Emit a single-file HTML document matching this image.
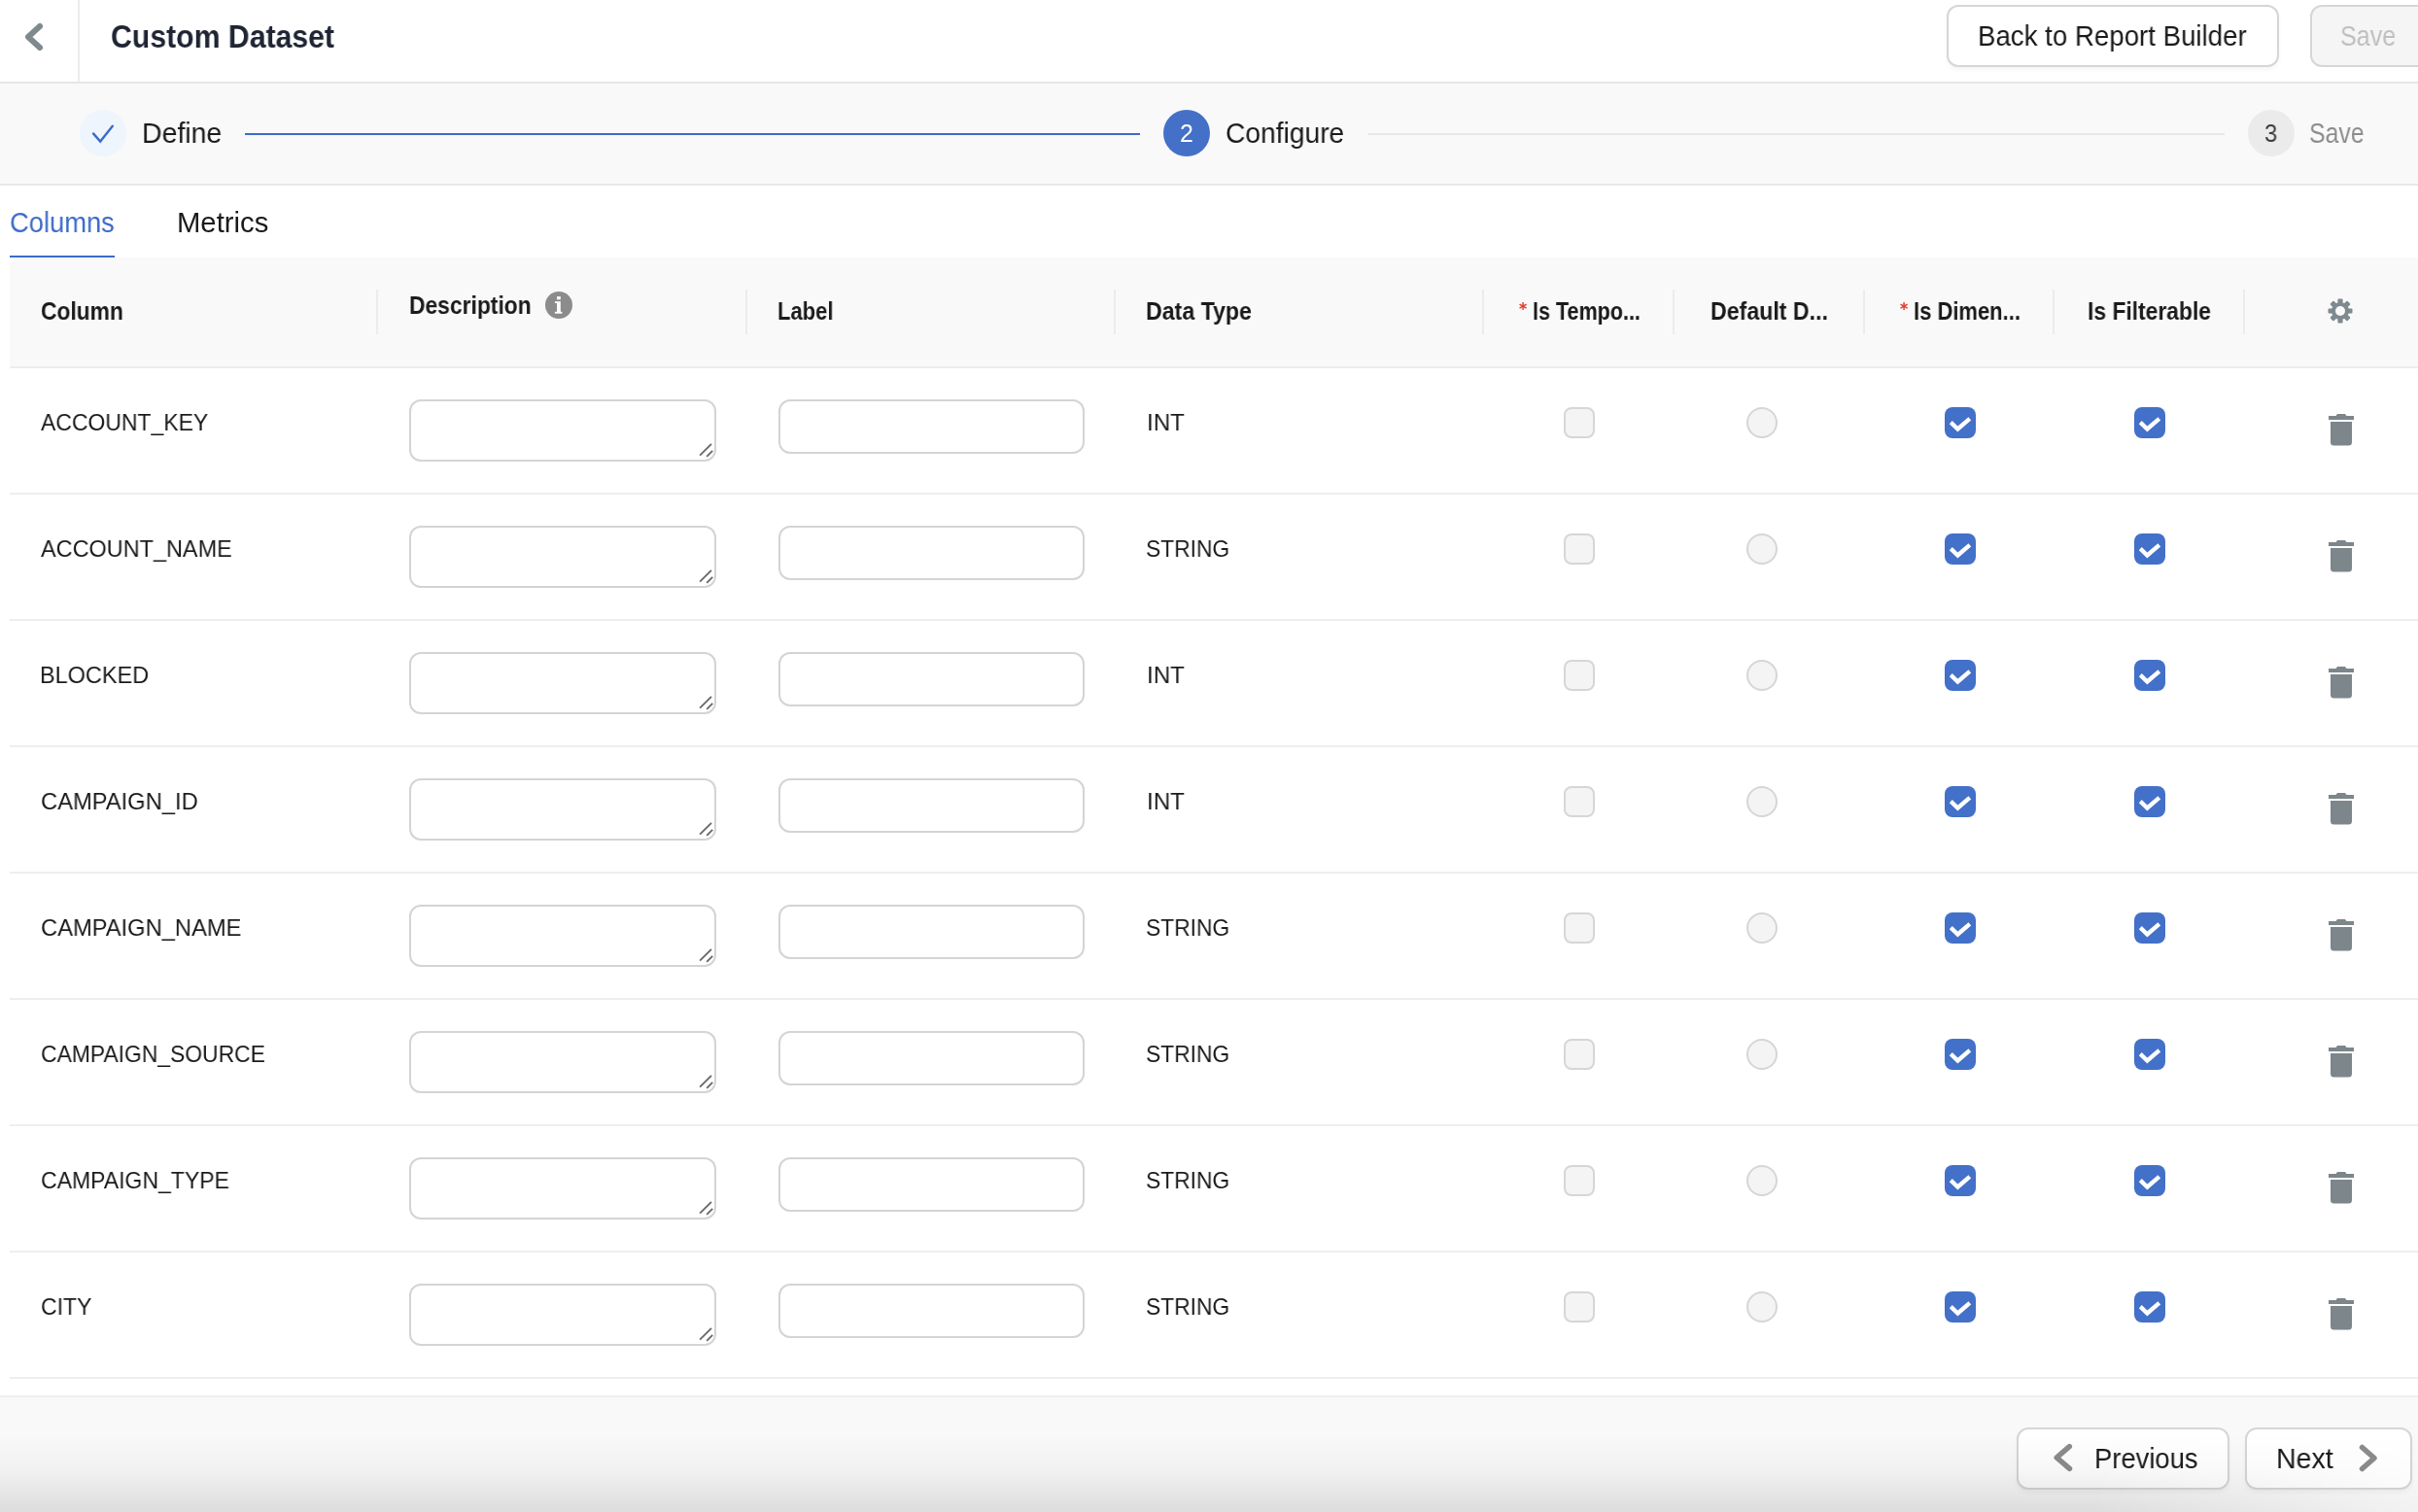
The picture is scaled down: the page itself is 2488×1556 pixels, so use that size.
<!DOCTYPE html>
<html><head><meta charset="utf-8"><title>Custom Dataset</title><style>
html,body{margin:0;padding:0}
body{width:2488px;height:1556px;overflow:hidden;position:relative;background:#fff;font-family:"Liberation Sans",sans-serif}
.t{position:absolute;line-height:1;white-space:nowrap;transform-origin:0 0;will-change:transform}
.c{text-align:center}
.btn{position:absolute;box-sizing:border-box;border:2px solid #d6d6d6;border-radius:12px;background:#fff;box-shadow:0 3px 4px rgba(0,0,0,0.04)}
.circ{position:absolute;width:48px;height:48px;border-radius:50%}
.ta{position:absolute;box-sizing:border-box;width:316px;height:64px;border:2px solid #d4d4d4;border-radius:12px;background:#fff}
.inp{position:absolute;box-sizing:border-box;width:315px;height:56px;border:2px solid #d4d4d4;border-radius:12px;background:#fff}
.cb{position:absolute;box-sizing:border-box;width:32px;height:32px;border:2px solid #d6d6d6;border-radius:8px;background:#f4f4f4}
@media (max-width:1400px){html{zoom:0.5}}
</style></head><body>
<div style="position:absolute;left:0;top:0;width:2488px;height:84px;background:#fff"></div>
<div style="position:absolute;left:0;top:84px;width:2488px;height:2px;background:#e6e6e6"></div>
<div style="position:absolute;left:80px;top:0;width:2px;height:84px;background:#e9edf0"></div>
<svg style="position:absolute;left:0;top:0" width="80" height="84"><polyline points="41,27 29,38 41,49" fill="none" stroke="#7f8a8f" stroke-width="6" stroke-linecap="round" stroke-linejoin="round"/></svg>
<div class="t" style="left:114.09px;top:20.73px;font-size:33.333px;font-weight:700;color:#1f2533;transform:scaleX(0.9067)">Custom Dataset</div>
<div class="btn" style="left:2003px;top:5px;width:342px;height:64px;"></div>
<div class="t" style="left:2035.20px;top:23.28px;font-size:29.13px;font-weight:400;color:#1a1a1a;transform:scaleX(0.9495)">Back to Report Builder</div>
<div class="btn" style="left:2377px;top:5px;width:140px;height:64px;background:#f5f5f5;box-shadow:none"></div>
<div class="t" style="left:2408.39px;top:23.05px;font-size:29.058px;font-weight:400;color:#bfbfbf;transform:scaleX(0.8648)">Save</div>
<div style="position:absolute;left:0;top:86px;width:2488px;height:103px;background:#f9f9f9"></div>
<div style="position:absolute;left:0;top:189px;width:2488px;height:2px;background:#e8e8e8"></div>
<div class="circ" style="left:82px;top:113px;background:#eef5fd"></div>
<svg style="position:absolute;left:82px;top:113px" width="48" height="48"><polyline points="14,24.4 21.2,32.6 33.8,16.8" fill="none" stroke="#3d6bc9" stroke-width="2.4" stroke-linecap="round" stroke-linejoin="miter"/></svg>
<div class="t" style="left:145.85px;top:123.36px;font-size:29.275px;font-weight:400;color:#1a1a1a;transform:scaleX(0.9728)">Define</div>
<div style="position:absolute;left:252px;top:137px;width:921px;height:2px;background:#3d6bc9"></div>
<div class="circ" style="left:1197px;top:113px;background:#4470c8"></div>
<div class="t" style="left:1214.00px;top:124.94px;font-size:24.928px;font-weight:400;color:#fff;transform:scaleX(1.0)">2</div>
<div class="t" style="left:1261.03px;top:123.28px;font-size:29.13px;font-weight:400;color:#1a1a1a;transform:scaleX(0.9677)">Configure</div>
<div style="position:absolute;left:1408px;top:137px;width:881px;height:2px;background:#e8e8e8"></div>
<div class="circ" style="left:2313px;top:113px;background:#ebebeb"></div>
<div class="t" style="left:2330.04px;top:124.94px;font-size:24.928px;font-weight:400;color:#3c3c3c;transform:scaleX(0.9583)">3</div>
<div class="t" style="left:2376.44px;top:123.23px;font-size:28.841px;font-weight:400;color:#8c8c8c;transform:scaleX(0.8609)">Save</div>
<div class="t" style="left:10.06px;top:214.58px;font-size:29.13px;font-weight:400;color:#3d6bc9;transform:scaleX(0.9381)">Columns</div>
<div style="position:absolute;left:10px;top:263px;width:108px;height:2px;background:#3d6bc9"></div>
<div class="t" style="left:182.09px;top:215.38px;font-size:29.13px;font-weight:400;color:#1a1a1a;transform:scaleX(1.0044)">Metrics</div>
<div style="position:absolute;left:10px;top:265px;width:2495px;height:112px;background:#f9f9f9;border-top-left-radius:12px"></div>
<div style="position:absolute;left:10px;top:377px;width:2495px;height:2px;background:#ededed"></div>
<div style="position:absolute;left:387px;top:298px;width:2px;height:46px;background:#ececec"></div>
<div style="position:absolute;left:767px;top:298px;width:2px;height:46px;background:#ececec"></div>
<div style="position:absolute;left:1146px;top:298px;width:2px;height:46px;background:#ececec"></div>
<div style="position:absolute;left:1525px;top:298px;width:2px;height:46px;background:#ececec"></div>
<div style="position:absolute;left:1721px;top:298px;width:2px;height:46px;background:#ececec"></div>
<div style="position:absolute;left:1917px;top:298px;width:2px;height:46px;background:#ececec"></div>
<div style="position:absolute;left:2112px;top:298px;width:2px;height:46px;background:#ececec"></div>
<div style="position:absolute;left:2308px;top:298px;width:2px;height:46px;background:#ececec"></div>
<div class="t" style="left:41.68px;top:308.04px;font-size:24.928px;font-weight:700;color:#1a1a1a;transform:scaleX(0.9156)">Column</div>
<div class="t" style="left:420.77px;top:301.74px;font-size:24.928px;font-weight:700;color:#1a1a1a;transform:scaleX(0.9172)">Description</div>
<svg style="position:absolute;left:561px;top:300px" width="28" height="28"><circle cx="14" cy="14" r="14" fill="#8c8c8c"/><g fill="#fff"><rect x="12" y="5.1" width="3.8" height="3.2"/><rect x="12" y="10.2" width="3.8" height="11.6"/><rect x="9.9" y="10.2" width="2.3" height="1.8"/><rect x="9.9" y="20.8" width="7.5" height="1.9"/></g></svg>
<div class="t" style="left:800.34px;top:307.84px;font-size:24.928px;font-weight:700;color:#1a1a1a;transform:scaleX(0.8823)">Label</div>
<div class="t" style="left:1179.14px;top:307.94px;font-size:24.928px;font-weight:700;color:#1a1a1a;transform:scaleX(0.9298)">Data Type</div>
<div class="t" style="left:1576.67px;top:307.74px;font-size:24.928px;font-weight:700;color:#1a1a1a;transform:scaleX(0.8648)">Is Tempo...</div>
<svg style="position:absolute;left:1562.7px;top:310.8px" width="8.2" height="8.2" viewBox="0 0 8 8"><g stroke="#e53d30" stroke-width="1.45"><line x1="4" y1="0" x2="4" y2="8"/><line x1="0.54" y1="2" x2="7.46" y2="6"/><line x1="0.54" y1="6" x2="7.46" y2="2"/></g></svg>
<div class="t" style="left:1759.64px;top:307.94px;font-size:24.928px;font-weight:700;color:#1a1a1a;transform:scaleX(0.9299)">Default D...</div>
<div class="t" style="left:1968.83px;top:307.94px;font-size:24.928px;font-weight:700;color:#1a1a1a;transform:scaleX(0.8826)">Is Dimen...</div>
<svg style="position:absolute;left:1955px;top:310.8px" width="8.2" height="8.2" viewBox="0 0 8 8"><g stroke="#e53d30" stroke-width="1.45"><line x1="4" y1="0" x2="4" y2="8"/><line x1="0.54" y1="2" x2="7.46" y2="6"/><line x1="0.54" y1="6" x2="7.46" y2="2"/></g></svg>
<div class="t" style="left:2148.17px;top:307.94px;font-size:24.928px;font-weight:700;color:#1a1a1a;transform:scaleX(0.9169)">Is Filterable</div>
<svg style="position:absolute;left:2395px;top:307px" width="26" height="26" viewBox="0 0 26 26"><g fill="#7f8a8f" transform="translate(13 13)">
<rect x="-2.6" y="-12.5" width="5.2" height="25" rx="1"/>
<rect x="-2.6" y="-12.5" width="5.2" height="25" rx="1" transform="rotate(45)"/>
<rect x="-2.6" y="-12.5" width="5.2" height="25" rx="1" transform="rotate(90)"/>
<rect x="-2.6" y="-12.5" width="5.2" height="25" rx="1" transform="rotate(135)"/>
<circle r="9"/></g><circle cx="13" cy="13" r="5" fill="#f9f9f9"/></svg>
<div style="position:absolute;left:10px;top:507px;width:2495px;height:2px;background:#eeeeee"></div>
<div class="t" style="left:42.30px;top:423.06px;font-size:24.783px;font-weight:400;color:#1a1a1a;transform:scaleX(0.927)">ACCOUNT_KEY</div>
<div class="ta" style="left:421px;top:411px"><svg style="position:absolute;left:295px;top:43px" width="17" height="16"><path d="M2.1 12.7L14 0.8M9.2 13.9L15.2 7.9" stroke="#666" stroke-width="1.8"/></svg></div>
<div class="inp" style="left:801px;top:411px"></div>
<div class="t" style="left:1180.05px;top:423.06px;font-size:24.783px;font-weight:400;color:#1a1a1a;transform:scaleX(0.9737)">INT</div>
<div class="cb" style="left:1609px;top:419px"></div>
<div class="cb" style="left:1797px;top:419px;border-radius:50%"></div>
<svg style="position:absolute;left:2001px;top:419px" width="32" height="32"><rect width="32" height="32" rx="8" fill="#4370c8"/><polyline points="6.3,15.6 13.4,22.5 25.8,11.9" fill="none" stroke="#fff" stroke-width="4.3"/></svg>
<svg style="position:absolute;left:2196px;top:419px" width="32" height="32"><rect width="32" height="32" rx="8" fill="#4370c8"/><polyline points="6.3,15.6 13.4,22.5 25.8,11.9" fill="none" stroke="#fff" stroke-width="4.3"/></svg>
<svg style="position:absolute;left:2396px;top:426px" width="26" height="33"><path d="M0 2h7.5l1.5-2h8l1.5 2H26v4H0z" fill="#7c868b"/><path d="M2 8h22v21a3.5 3.5 0 0 1-3.5 3.5h-15A3.5 3.5 0 0 1 2 29z" fill="#7c868b"/></svg>
<div style="position:absolute;left:10px;top:637px;width:2495px;height:2px;background:#eeeeee"></div>
<div class="t" style="left:42.30px;top:553.06px;font-size:24.783px;font-weight:400;color:#1a1a1a;transform:scaleX(0.9469)">ACCOUNT_NAME</div>
<div class="ta" style="left:421px;top:541px"><svg style="position:absolute;left:295px;top:43px" width="17" height="16"><path d="M2.1 12.7L14 0.8M9.2 13.9L15.2 7.9" stroke="#666" stroke-width="1.8"/></svg></div>
<div class="inp" style="left:801px;top:541px"></div>
<div class="t" style="left:1179.28px;top:553.06px;font-size:24.783px;font-weight:400;color:#1a1a1a;transform:scaleX(0.9209)">STRING</div>
<div class="cb" style="left:1609px;top:549px"></div>
<div class="cb" style="left:1797px;top:549px;border-radius:50%"></div>
<svg style="position:absolute;left:2001px;top:549px" width="32" height="32"><rect width="32" height="32" rx="8" fill="#4370c8"/><polyline points="6.3,15.6 13.4,22.5 25.8,11.9" fill="none" stroke="#fff" stroke-width="4.3"/></svg>
<svg style="position:absolute;left:2196px;top:549px" width="32" height="32"><rect width="32" height="32" rx="8" fill="#4370c8"/><polyline points="6.3,15.6 13.4,22.5 25.8,11.9" fill="none" stroke="#fff" stroke-width="4.3"/></svg>
<svg style="position:absolute;left:2396px;top:556px" width="26" height="33"><path d="M0 2h7.5l1.5-2h8l1.5 2H26v4H0z" fill="#7c868b"/><path d="M2 8h22v21a3.5 3.5 0 0 1-3.5 3.5h-15A3.5 3.5 0 0 1 2 29z" fill="#7c868b"/></svg>
<div style="position:absolute;left:10px;top:767px;width:2495px;height:2px;background:#eeeeee"></div>
<div class="t" style="left:41.01px;top:683.06px;font-size:24.783px;font-weight:400;color:#1a1a1a;transform:scaleX(0.947)">BLOCKED</div>
<div class="ta" style="left:421px;top:671px"><svg style="position:absolute;left:295px;top:43px" width="17" height="16"><path d="M2.1 12.7L14 0.8M9.2 13.9L15.2 7.9" stroke="#666" stroke-width="1.8"/></svg></div>
<div class="inp" style="left:801px;top:671px"></div>
<div class="t" style="left:1180.05px;top:683.06px;font-size:24.783px;font-weight:400;color:#1a1a1a;transform:scaleX(0.9737)">INT</div>
<div class="cb" style="left:1609px;top:679px"></div>
<div class="cb" style="left:1797px;top:679px;border-radius:50%"></div>
<svg style="position:absolute;left:2001px;top:679px" width="32" height="32"><rect width="32" height="32" rx="8" fill="#4370c8"/><polyline points="6.3,15.6 13.4,22.5 25.8,11.9" fill="none" stroke="#fff" stroke-width="4.3"/></svg>
<svg style="position:absolute;left:2196px;top:679px" width="32" height="32"><rect width="32" height="32" rx="8" fill="#4370c8"/><polyline points="6.3,15.6 13.4,22.5 25.8,11.9" fill="none" stroke="#fff" stroke-width="4.3"/></svg>
<svg style="position:absolute;left:2396px;top:686px" width="26" height="33"><path d="M0 2h7.5l1.5-2h8l1.5 2H26v4H0z" fill="#7c868b"/><path d="M2 8h22v21a3.5 3.5 0 0 1-3.5 3.5h-15A3.5 3.5 0 0 1 2 29z" fill="#7c868b"/></svg>
<div style="position:absolute;left:10px;top:897px;width:2495px;height:2px;background:#eeeeee"></div>
<div class="t" style="left:41.94px;top:813.06px;font-size:24.783px;font-weight:400;color:#1a1a1a;transform:scaleX(0.9581)">CAMPAIGN_ID</div>
<div class="ta" style="left:421px;top:801px"><svg style="position:absolute;left:295px;top:43px" width="17" height="16"><path d="M2.1 12.7L14 0.8M9.2 13.9L15.2 7.9" stroke="#666" stroke-width="1.8"/></svg></div>
<div class="inp" style="left:801px;top:801px"></div>
<div class="t" style="left:1180.05px;top:813.06px;font-size:24.783px;font-weight:400;color:#1a1a1a;transform:scaleX(0.9737)">INT</div>
<div class="cb" style="left:1609px;top:809px"></div>
<div class="cb" style="left:1797px;top:809px;border-radius:50%"></div>
<svg style="position:absolute;left:2001px;top:809px" width="32" height="32"><rect width="32" height="32" rx="8" fill="#4370c8"/><polyline points="6.3,15.6 13.4,22.5 25.8,11.9" fill="none" stroke="#fff" stroke-width="4.3"/></svg>
<svg style="position:absolute;left:2196px;top:809px" width="32" height="32"><rect width="32" height="32" rx="8" fill="#4370c8"/><polyline points="6.3,15.6 13.4,22.5 25.8,11.9" fill="none" stroke="#fff" stroke-width="4.3"/></svg>
<svg style="position:absolute;left:2396px;top:816px" width="26" height="33"><path d="M0 2h7.5l1.5-2h8l1.5 2H26v4H0z" fill="#7c868b"/><path d="M2 8h22v21a3.5 3.5 0 0 1-3.5 3.5h-15A3.5 3.5 0 0 1 2 29z" fill="#7c868b"/></svg>
<div style="position:absolute;left:10px;top:1027px;width:2495px;height:2px;background:#eeeeee"></div>
<div class="t" style="left:41.94px;top:943.06px;font-size:24.783px;font-weight:400;color:#1a1a1a;transform:scaleX(0.9575)">CAMPAIGN_NAME</div>
<div class="ta" style="left:421px;top:931px"><svg style="position:absolute;left:295px;top:43px" width="17" height="16"><path d="M2.1 12.7L14 0.8M9.2 13.9L15.2 7.9" stroke="#666" stroke-width="1.8"/></svg></div>
<div class="inp" style="left:801px;top:931px"></div>
<div class="t" style="left:1179.28px;top:943.06px;font-size:24.783px;font-weight:400;color:#1a1a1a;transform:scaleX(0.9209)">STRING</div>
<div class="cb" style="left:1609px;top:939px"></div>
<div class="cb" style="left:1797px;top:939px;border-radius:50%"></div>
<svg style="position:absolute;left:2001px;top:939px" width="32" height="32"><rect width="32" height="32" rx="8" fill="#4370c8"/><polyline points="6.3,15.6 13.4,22.5 25.8,11.9" fill="none" stroke="#fff" stroke-width="4.3"/></svg>
<svg style="position:absolute;left:2196px;top:939px" width="32" height="32"><rect width="32" height="32" rx="8" fill="#4370c8"/><polyline points="6.3,15.6 13.4,22.5 25.8,11.9" fill="none" stroke="#fff" stroke-width="4.3"/></svg>
<svg style="position:absolute;left:2396px;top:946px" width="26" height="33"><path d="M0 2h7.5l1.5-2h8l1.5 2H26v4H0z" fill="#7c868b"/><path d="M2 8h22v21a3.5 3.5 0 0 1-3.5 3.5h-15A3.5 3.5 0 0 1 2 29z" fill="#7c868b"/></svg>
<div style="position:absolute;left:10px;top:1157px;width:2495px;height:2px;background:#eeeeee"></div>
<div class="t" style="left:41.98px;top:1073.06px;font-size:24.783px;font-weight:400;color:#1a1a1a;transform:scaleX(0.9238)">CAMPAIGN_SOURCE</div>
<div class="ta" style="left:421px;top:1061px"><svg style="position:absolute;left:295px;top:43px" width="17" height="16"><path d="M2.1 12.7L14 0.8M9.2 13.9L15.2 7.9" stroke="#666" stroke-width="1.8"/></svg></div>
<div class="inp" style="left:801px;top:1061px"></div>
<div class="t" style="left:1179.28px;top:1073.06px;font-size:24.783px;font-weight:400;color:#1a1a1a;transform:scaleX(0.9209)">STRING</div>
<div class="cb" style="left:1609px;top:1069px"></div>
<div class="cb" style="left:1797px;top:1069px;border-radius:50%"></div>
<svg style="position:absolute;left:2001px;top:1069px" width="32" height="32"><rect width="32" height="32" rx="8" fill="#4370c8"/><polyline points="6.3,15.6 13.4,22.5 25.8,11.9" fill="none" stroke="#fff" stroke-width="4.3"/></svg>
<svg style="position:absolute;left:2196px;top:1069px" width="32" height="32"><rect width="32" height="32" rx="8" fill="#4370c8"/><polyline points="6.3,15.6 13.4,22.5 25.8,11.9" fill="none" stroke="#fff" stroke-width="4.3"/></svg>
<svg style="position:absolute;left:2396px;top:1076px" width="26" height="33"><path d="M0 2h7.5l1.5-2h8l1.5 2H26v4H0z" fill="#7c868b"/><path d="M2 8h22v21a3.5 3.5 0 0 1-3.5 3.5h-15A3.5 3.5 0 0 1 2 29z" fill="#7c868b"/></svg>
<div style="position:absolute;left:10px;top:1287px;width:2495px;height:2px;background:#eeeeee"></div>
<div class="t" style="left:41.97px;top:1203.06px;font-size:24.783px;font-weight:400;color:#1a1a1a;transform:scaleX(0.929)">CAMPAIGN_TYPE</div>
<div class="ta" style="left:421px;top:1191px"><svg style="position:absolute;left:295px;top:43px" width="17" height="16"><path d="M2.1 12.7L14 0.8M9.2 13.9L15.2 7.9" stroke="#666" stroke-width="1.8"/></svg></div>
<div class="inp" style="left:801px;top:1191px"></div>
<div class="t" style="left:1179.28px;top:1203.06px;font-size:24.783px;font-weight:400;color:#1a1a1a;transform:scaleX(0.9209)">STRING</div>
<div class="cb" style="left:1609px;top:1199px"></div>
<div class="cb" style="left:1797px;top:1199px;border-radius:50%"></div>
<svg style="position:absolute;left:2001px;top:1199px" width="32" height="32"><rect width="32" height="32" rx="8" fill="#4370c8"/><polyline points="6.3,15.6 13.4,22.5 25.8,11.9" fill="none" stroke="#fff" stroke-width="4.3"/></svg>
<svg style="position:absolute;left:2196px;top:1199px" width="32" height="32"><rect width="32" height="32" rx="8" fill="#4370c8"/><polyline points="6.3,15.6 13.4,22.5 25.8,11.9" fill="none" stroke="#fff" stroke-width="4.3"/></svg>
<svg style="position:absolute;left:2396px;top:1206px" width="26" height="33"><path d="M0 2h7.5l1.5-2h8l1.5 2H26v4H0z" fill="#7c868b"/><path d="M2 8h22v21a3.5 3.5 0 0 1-3.5 3.5h-15A3.5 3.5 0 0 1 2 29z" fill="#7c868b"/></svg>
<div style="position:absolute;left:10px;top:1417px;width:2495px;height:2px;background:#eeeeee"></div>
<div class="t" style="left:42.17px;top:1333.06px;font-size:24.783px;font-weight:400;color:#1a1a1a;transform:scaleX(0.9273)">CITY</div>
<div class="ta" style="left:421px;top:1321px"><svg style="position:absolute;left:295px;top:43px" width="17" height="16"><path d="M2.1 12.7L14 0.8M9.2 13.9L15.2 7.9" stroke="#666" stroke-width="1.8"/></svg></div>
<div class="inp" style="left:801px;top:1321px"></div>
<div class="t" style="left:1179.28px;top:1333.06px;font-size:24.783px;font-weight:400;color:#1a1a1a;transform:scaleX(0.9209)">STRING</div>
<div class="cb" style="left:1609px;top:1329px"></div>
<div class="cb" style="left:1797px;top:1329px;border-radius:50%"></div>
<svg style="position:absolute;left:2001px;top:1329px" width="32" height="32"><rect width="32" height="32" rx="8" fill="#4370c8"/><polyline points="6.3,15.6 13.4,22.5 25.8,11.9" fill="none" stroke="#fff" stroke-width="4.3"/></svg>
<svg style="position:absolute;left:2196px;top:1329px" width="32" height="32"><rect width="32" height="32" rx="8" fill="#4370c8"/><polyline points="6.3,15.6 13.4,22.5 25.8,11.9" fill="none" stroke="#fff" stroke-width="4.3"/></svg>
<svg style="position:absolute;left:2396px;top:1336px" width="26" height="33"><path d="M0 2h7.5l1.5-2h8l1.5 2H26v4H0z" fill="#7c868b"/><path d="M2 8h22v21a3.5 3.5 0 0 1-3.5 3.5h-15A3.5 3.5 0 0 1 2 29z" fill="#7c868b"/></svg>
<div style="position:absolute;left:0;top:1436px;width:2488px;height:120px;background:#f9f9f9"></div>
<div style="position:absolute;left:0;top:1436px;width:2488px;height:2px;background:#efefef"></div>
<div class="btn" style="left:2075px;top:1469px;width:219px;height:64px;"></div>
<svg style="position:absolute;left:2076px;top:1469px" width="80" height="63"><polyline points="53.3,19.6 40.2,31 53.5,42.4" fill="none" stroke="#8c8c8c" stroke-width="5.5" stroke-linecap="round" stroke-linejoin="round"/></svg>
<div class="t" style="left:2155.11px;top:1487.47px;font-size:28.913px;font-weight:400;color:#1a1a1a;transform:scaleX(0.9473)">Previous</div>
<div class="btn" style="left:2310px;top:1469px;width:172px;height:64px;"></div>
<div class="t" style="left:2342.24px;top:1487.38px;font-size:29.13px;font-weight:400;color:#1a1a1a;transform:scaleX(0.9793)">Next</div>
<svg style="position:absolute;left:2400px;top:1469px" width="60" height="63"><polyline points="30.5,20.5 43,31.5 30.5,42.5" fill="none" stroke="#8c8c8c" stroke-width="5.5" stroke-linecap="round" stroke-linejoin="round"/></svg>
<div style="position:absolute;left:0;top:1476px;width:2488px;height:80px;background:linear-gradient(to bottom, rgba(0,0,0,0) 0%, rgba(0,0,0,0.03) 45%, rgba(0,0,0,0.11) 100%);-webkit-mask-image:linear-gradient(to right,#000 0,#000 2150px,rgba(0,0,0,0.25) 2488px);mask-image:linear-gradient(to right,#000 0,#000 2150px,rgba(0,0,0,0.25) 2488px)"></div>
</body></html>
